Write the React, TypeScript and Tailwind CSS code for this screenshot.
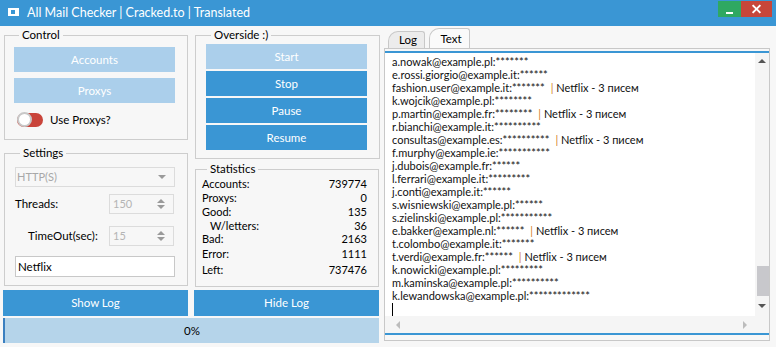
import { FC, ReactNode } from "react";

// sample output lines (placeholder accounts, passwords masked)
const logLines: { text: string; hit?: boolean }[] = [
  { text: "a.nowak@example.pl:*******" },
  { text: "e.rossi.giorgio@example.it:******" },
  { text: "fashion.user@example.it:*******", hit: true },
  { text: "k.wojcik@example.pl:********" },
  { text: "p.martin@example.fr:********", hit: true },
  { text: "r.bianchi@example.it:**********" },
  { text: "consultas@example.es:**********", hit: true },
  { text: "f.murphy@example.ie:***********" },
  { text: "j.dubois@example.fr:******" },
  { text: "l.ferrari@example.it:*********" },
  { text: "j.conti@example.it:******" },
  { text: "s.wisniewski@example.pl:******" },
  { text: "s.zielinski@example.pl:***********" },
  { text: "e.bakker@example.nl:******", hit: true },
  { text: "t.colombo@example.it:*******" },
  { text: "t.verdi@example.fr:******", hit: true },
  { text: "k.nowicki@example.pl:*********" },
  { text: "m.kaminska@example.pl:**********" },
  { text: "k.lewandowska@example.pl:*************" },
];

const stats = [
  { label: "Accounts:", value: "739774", cls: "h-[15px]" },
  { label: "Proxys:", value: "0", cls: "h-[14px]" },
  { label: "Good:", value: "135", cls: "h-[14px]" },
  { label: "W/letters:", value: "36", cls: "h-[13px] pl-[8px]" },
  { label: "Bad:", value: "2163", cls: "h-[13px]" },
  { label: "Error:", value: "1111", cls: "h-[16px] pt-[2px]" },
  { label: "Left:", value: "737476", cls: "h-[16px] pt-[2px]" },
];

const Group: FC<{ title: string; className: string; children: ReactNode }> = ({
  title,
  className,
  children,
}) => (
  <fieldset className={"border border-[#cdcdcd] " + className}>
    <legend className="ml-[5px] px-[3px] text-[11.5px] leading-[14px] text-black">
      {title}
    </legend>
    {children}
  </fieldset>
);

const Btn: FC<{ label: string; light?: boolean; className?: string }> = ({
  label,
  light,
  className = "",
}) => (
  <div
    className={
      "flex items-center justify-center text-[11.5px] text-white " +
      (light ? "bg-[#abcfeb] " : "bg-[#3a96d4] ") +
      className
    }
  >
    {label}
  </div>
);

const Spin: FC<{ value: string }> = ({ value }) => (
  <div className="flex h-[20px] w-[65px] items-center justify-between border border-[#dcdcdc] bg-[#f7f7f7] pl-[3px] pr-[8px] text-[11px] text-[#b4b4b4]">
    {value}
    <div className="flex flex-col gap-[2px]">
      <div className="h-0 w-0 border-x-[4px] border-b-[4px] border-x-transparent border-b-[#9a9a9a]" />
      <div className="h-0 w-0 border-x-[4px] border-t-[4px] border-x-transparent border-t-[#9a9a9a]" />
    </div>
  </div>
);

const App: FC = () => {
  return (
    <div
      className="flex h-[347px] w-[776px] flex-col overflow-hidden bg-[#f7f7f7] text-black"
      style={{ fontFamily: "Lato, 'Liberation Sans', sans-serif" }}
    >
      {/* title bar */}
      <div className="flex h-[26px] shrink-0 items-start bg-[#3a96d4]">
        <div className="ml-[8px] mt-[8px] flex h-[8px] w-[11px] items-start border border-white bg-white">
          <div className="ml-[2px] mt-[1px] h-[4px] w-[4px] bg-[#3a96d4]" />
        </div>
        <span className="ml-[8px] mt-[5px] text-[12.5px] leading-[16px] text-white">
          All Mail Checker | Cracked.to | Translated
        </span>
        <div className="ml-auto mr-[4px] mt-[1px] flex h-[16px]">
          <div className="flex w-[23px] items-end justify-center bg-[#2fa862] pb-[3px]">
            <div className="h-[2px] w-[7px] bg-white" />
          </div>
          <div className="relative w-[31px] bg-[#c7463a]">
            <div className="absolute left-[10px] top-[7px] h-[2px] w-[11px] rotate-45 bg-white" />
            <div className="absolute left-[10px] top-[7px] h-[2px] w-[11px] -rotate-45 bg-white" />
          </div>
        </div>
      </div>

      <div className="flex flex-1">
        {/* left side */}
        <div className="flex w-[382px] flex-col pl-[3px]">
          <div className="mt-[2px] flex gap-[6px]">
            <div className="flex w-[185px] flex-col">
              <Group title="Control" className="ml-[1px] h-[112px] w-[184px] px-[9px] pt-[5px]">
                <Btn label="Accounts" light className="h-[25px] w-[161px]" />
                <Btn label="Proxys" light className="mt-[6px] h-[25px] w-[161px]" />
                <div className="mt-[8px] flex items-center">
                  <div className="ml-[3px] flex h-[14px] w-[26px] items-center rounded-full bg-[#c9443a]">
                    <div className="h-[15px] w-[15px] rounded-full border-[2px] border-[#c8c8c8] bg-white" />
                  </div>
                  <span className="ml-[7px] text-[11.5px]">Use Proxys?</span>
                </div>
              </Group>
              <Group title="Settings" className="ml-[1px] mt-[6px] h-[140px] w-[184px] px-[10px] pt-[7px]">
                <div className="flex h-[20px] w-[160px] items-center justify-between border border-[#dcdcdc] bg-[#f7f7f7] pl-[1px] pr-[8px] text-[11px] text-[#a8a8a8]">
                  HTTP(S)
                  <div className="h-0 w-0 border-x-[4px] border-t-[4px] border-x-transparent border-t-[#9a9a9a]" />
                </div>
                <div className="mt-[7px] flex items-center justify-between pr-[3px]">
                  <span className="text-[11.5px]">Threads:</span>
                  <Spin value="150" />
                </div>
                <div className="mt-[12px] flex items-center justify-between pr-[3px]">
                  <span className="pl-[13px] text-[11.5px]">TimeOut(sec):</span>
                  <Spin value="15" />
                </div>
                <div className="mt-[10px] flex h-[21px] w-[160px] items-center border border-[#c8c8c8] bg-white pl-[2px] text-[11.5px]">
                  Netflix
                </div>
              </Group>
            </div>

            <div className="flex w-[185px] flex-col">
              <Group title="Overside :)" className="ml-[1px] h-[131px] w-[185px] pl-[10px] pt-[2px]">
                <Btn label="Start" light className="h-[25px] w-[161px]" />
                <Btn label="Stop" className="mt-[2px] h-[25px] w-[161px]" />
                <Btn label="Pause" className="mt-[2px] h-[25px] w-[161px]" />
                <Btn label="Resume" className="mt-[2px] h-[25px] w-[161px]" />
              </Group>
              <Group title="Statistics" className="ml-[1px] mt-[3px] h-[125px] w-[184px] pl-[6px] pr-[11px]">
                {stats.map((s) => (
                  <div
                    key={s.label}
                    className={"flex items-center justify-between text-[11px] leading-[12px] " + s.cls}
                  >
                    <span>{s.label}</span>
                    <span>{s.value}</span>
                  </div>
                ))}
              </Group>
            </div>
          </div>

          <div className="mt-[3px] flex gap-[6px]">
            <Btn label="Show Log" className="h-[26px] w-[185px]" />
            <Btn label="Hide Log" className="h-[26px] w-[185px]" />
          </div>
          <div className="mt-[2px] flex h-[25px] w-[376px] items-center justify-center border-l-[2px] border-[#3a7fc0] bg-[#b5d4ea] text-[11.5px]">
            0%
          </div>
        </div>

        {/* right side */}
        <div className="ml-[2px] mt-[2px] flex w-[386px] flex-col">
          <div className="flex h-[20px] items-end pl-[4px]">
            <div className="flex h-[17px] w-[37px] items-center justify-center rounded-tl-[10px] rounded-tr-[3px] border border-b-0 border-[#c8c8c8] bg-[#ececec] pl-[3px] text-[11.5px]">
              Log
            </div>
            <div className="ml-[4px] flex h-[20px] w-[41px] items-center justify-center rounded-tl-[10px] rounded-tr-[3px] border border-b-0 border-[#c8c8c8] bg-[#fafafa] pl-[3px] text-[11.5px]">
              Text
            </div>
          </div>
          <div className="flex h-[293px] flex-col border border-[#c8c8c8] bg-[#f7f7f7] pt-[2px]">
            <div className="h-[2px] bg-[#3a96d4]" />
            <div className="flex h-[263px]">
              <div className="flex-1 overflow-hidden bg-white pl-[7px] pt-[2px] text-[11px] leading-[13px] text-[#111]">
                {logLines.map((l, i) => (
                  <div key={i} className="whitespace-nowrap">
                    {l.text}
                    {l.hit && (
                      <>
                        <span className="ml-[6px] text-[#d3801f]">|</span> Netflix - 3 писем
                      </>
                    )}
                  </div>
                ))}
                <div className="mt-[1px] h-[13px] w-[1px] bg-black" />
              </div>
              <div className="flex w-[14px] flex-col items-center justify-between bg-[#f5f5f5] pb-[8px] pt-[6px]">
                <div className="h-0 w-0 border-x-[4px] border-b-[4px] border-x-transparent border-b-[#555]" />
                <div className="flex w-full flex-col items-end">
                  <div className="h-[30px] w-[12px] bg-[#c8c8cc]" />
                  <div className="mx-auto mt-[8px] h-0 w-0 border-x-[4px] border-t-[4px] border-x-transparent border-t-[#555]" />
                </div>
              </div>
            </div>
            <div className="flex h-[17px] items-center justify-between bg-[#f5f5f5] pl-[11px] pr-[22px]">
              <div className="h-0 w-0 border-y-[4px] border-r-[4px] border-y-transparent border-r-[#bcbcbc]" />
              <div className="h-0 w-0 border-y-[4px] border-l-[4px] border-y-transparent border-l-[#bcbcbc]" />
            </div>
            <div className="h-[2px] bg-[#3a96d4]" />
          </div>
        </div>
      </div>
    </div>
  );
};

export default App;
